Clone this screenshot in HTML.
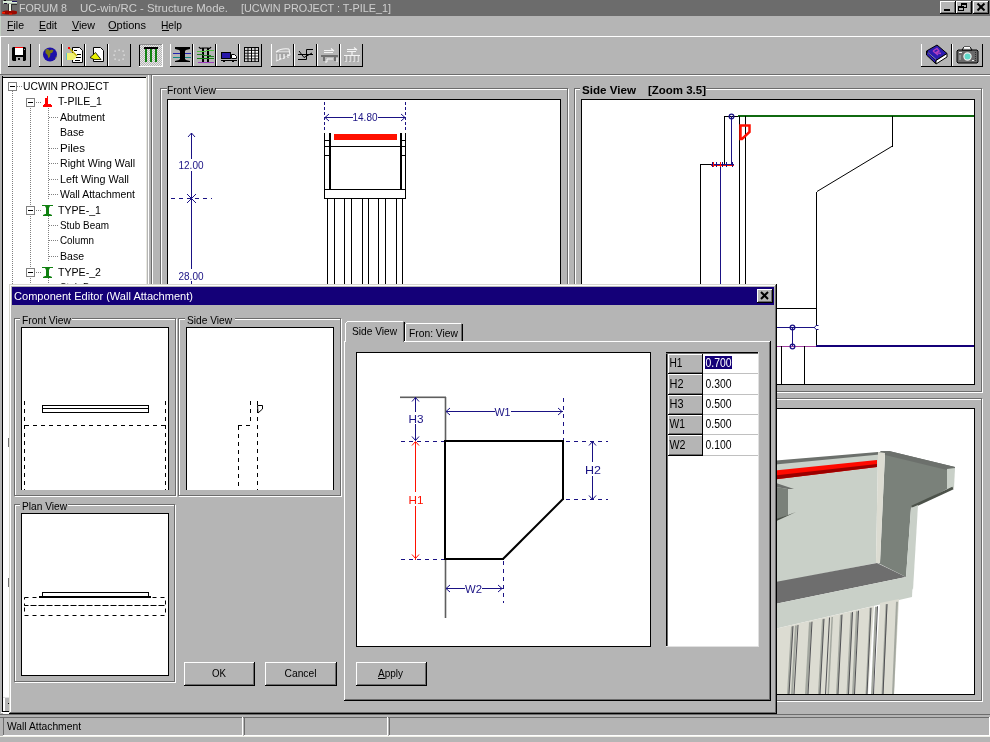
<!DOCTYPE html>
<html><head><meta charset="utf-8"><style>
html,body{margin:0;padding:0;background:#b5b5b5;overflow:hidden}
svg{display:block;will-change:transform}
text{font-family:"Liberation Sans", sans-serif}
</style></head><body>
<svg width="990" height="742" viewBox="0 0 990 742" shape-rendering="auto">
<rect x="0" y="0" width="990" height="742" fill="#b5b5b5"/>
<rect x="0" y="0" width="990" height="16" fill="#6c6c6c"/>
<rect x="0" y="0" width="1" height="16" fill="#8a8a8a"/>
<rect x="4" y="0" width="2" height="1" fill="#000000"/>
<rect x="3" y="1" width="14" height="2.5" fill="#d8ecd8"/>
<rect x="12" y="1" width="5" height="1" fill="#201860"/>
<rect x="4" y="3" width="3" height="1" fill="#201030"/>
<rect x="8" y="4" width="1" height="7" fill="#303030"/>
<rect x="9" y="4" width="2" height="7" fill="#f0f8e8"/>
<rect x="11" y="4" width="1" height="6" fill="#303030"/>
<rect x="12" y="4" width="5" height="1" fill="#303030"/>
<path d="M2 12 Q3 10.5 6 10.5 H13 Q17 10.5 17 12 V13.5 Q16 14.5 12 14.5 H7 Q3 14.5 2 13.5 Z" fill="#9a0800" />
<rect x="2" y="12" width="3" height="1.5" fill="#ff2000"/>
<rect x="9" y="13.5" width="3" height="1" fill="#ff2000"/>
<rect x="9" y="10" width="2" height="1" fill="#f0f8e8"/>
<text x="19" y="12" font-size="11.5" fill="#cfcfcf" textLength="48" lengthAdjust="spacingAndGlyphs" >FORUM 8</text>
<text x="80" y="12" font-size="11.5" fill="#cfcfcf" textLength="148" lengthAdjust="spacingAndGlyphs" >UC-win/RC - Structure Mode.</text>
<text x="241" y="12" font-size="11.5" fill="#cfcfcf" textLength="150" lengthAdjust="spacingAndGlyphs" >[UCWIN PROJECT : T-PILE_1]</text>
<rect x="940" y="1" width="16" height="13" fill="#b5b5b5"/>
<rect x="940" y="1" width="16" height="1" fill="#ffffff"/>
<rect x="940" y="1" width="1" height="13" fill="#ffffff"/>
<rect x="940" y="13" width="16" height="1" fill="#000000"/>
<rect x="955" y="1" width="1" height="13" fill="#000000"/>
<rect x="941" y="12" width="14" height="1" fill="#6c6c6c"/>
<rect x="954" y="2" width="1" height="11" fill="#6c6c6c"/>
<rect x="956" y="1" width="16" height="13" fill="#b5b5b5"/>
<rect x="956" y="1" width="16" height="1" fill="#ffffff"/>
<rect x="956" y="1" width="1" height="13" fill="#ffffff"/>
<rect x="956" y="13" width="16" height="1" fill="#000000"/>
<rect x="971" y="1" width="1" height="13" fill="#000000"/>
<rect x="957" y="12" width="14" height="1" fill="#6c6c6c"/>
<rect x="970" y="2" width="1" height="11" fill="#6c6c6c"/>
<rect x="973" y="1" width="16" height="13" fill="#b5b5b5"/>
<rect x="973" y="1" width="16" height="1" fill="#ffffff"/>
<rect x="973" y="1" width="1" height="13" fill="#ffffff"/>
<rect x="973" y="13" width="16" height="1" fill="#000000"/>
<rect x="988" y="1" width="1" height="13" fill="#000000"/>
<rect x="974" y="12" width="14" height="1" fill="#6c6c6c"/>
<rect x="987" y="2" width="1" height="11" fill="#6c6c6c"/>
<rect x="944" y="9" width="6" height="2" fill="#000000"/>
<rect x="961" y="3" width="6" height="1" fill="#000000"/>
<rect x="961" y="7" width="6" height="1" fill="#000000"/>
<rect x="961" y="3" width="1" height="5" fill="#000000"/>
<rect x="966" y="3" width="1" height="5" fill="#000000"/>
<rect x="961" y="3" width="6" height="2" fill="#000000"/>
<rect x="958" y="6" width="6" height="5" fill="#b5b5b5"/>
<rect x="958" y="6" width="6" height="1" fill="#000000"/>
<rect x="958" y="10" width="6" height="1" fill="#000000"/>
<rect x="958" y="6" width="1" height="5" fill="#000000"/>
<rect x="963" y="6" width="1" height="5" fill="#000000"/>
<rect x="958" y="6" width="6" height="2" fill="#000000"/>
<line x1="977.5" y1="3.5" x2="984.5" y2="10.5" stroke="#000000" stroke-width="2" stroke-linecap="butt"/>
<line x1="984.5" y1="3.5" x2="977.5" y2="10.5" stroke="#000000" stroke-width="2" stroke-linecap="butt"/>
<rect x="0" y="36" width="990" height="1" fill="#ffffff"/>
<text x="7" y="28.7" font-size="11.5" fill="#000000" textLength="17" lengthAdjust="spacingAndGlyphs" >File</text>
<text x="39" y="28.7" font-size="11.5" fill="#000000" textLength="18" lengthAdjust="spacingAndGlyphs" >Edit</text>
<text x="72" y="28.7" font-size="11.5" fill="#000000" textLength="23" lengthAdjust="spacingAndGlyphs" >View</text>
<text x="108" y="28.7" font-size="11.5" fill="#000000" textLength="38" lengthAdjust="spacingAndGlyphs" >Options</text>
<text x="161" y="28.7" font-size="11.5" fill="#000000" textLength="21" lengthAdjust="spacingAndGlyphs" >Help</text>
<rect x="7" y="30" width="7" height="1" fill="#000000"/>
<rect x="39" y="30" width="7" height="1" fill="#000000"/>
<rect x="72" y="30" width="7" height="1" fill="#000000"/>
<rect x="109" y="30" width="8" height="1" fill="#000000"/>
<rect x="162" y="30" width="7" height="1" fill="#000000"/>
<rect x="8" y="44" width="1" height="23" fill="#ffffff"/>
<rect x="30" y="44" width="1" height="23" fill="#000000"/>
<rect x="8" y="66" width="23" height="1" fill="#000000"/>
<rect x="39" y="44" width="1" height="23" fill="#ffffff"/>
<rect x="61" y="44" width="1" height="23" fill="#000000"/>
<rect x="39" y="66" width="23" height="1" fill="#000000"/>
<rect x="62" y="44" width="1" height="23" fill="#ffffff"/>
<rect x="84" y="44" width="1" height="23" fill="#000000"/>
<rect x="62" y="66" width="23" height="1" fill="#000000"/>
<rect x="85" y="44" width="1" height="23" fill="#ffffff"/>
<rect x="107" y="44" width="1" height="23" fill="#000000"/>
<rect x="85" y="66" width="23" height="1" fill="#000000"/>
<rect x="108" y="44" width="1" height="23" fill="#ffffff"/>
<rect x="130" y="44" width="1" height="23" fill="#000000"/>
<rect x="108" y="66" width="23" height="1" fill="#000000"/>
<rect x="170" y="44" width="1" height="23" fill="#ffffff"/>
<rect x="192" y="44" width="1" height="23" fill="#000000"/>
<rect x="170" y="66" width="23" height="1" fill="#000000"/>
<rect x="193" y="44" width="1" height="23" fill="#ffffff"/>
<rect x="215" y="44" width="1" height="23" fill="#000000"/>
<rect x="193" y="66" width="23" height="1" fill="#000000"/>
<rect x="216" y="44" width="1" height="23" fill="#ffffff"/>
<rect x="238" y="44" width="1" height="23" fill="#000000"/>
<rect x="216" y="66" width="23" height="1" fill="#000000"/>
<rect x="239" y="44" width="1" height="23" fill="#ffffff"/>
<rect x="261" y="44" width="1" height="23" fill="#000000"/>
<rect x="239" y="66" width="23" height="1" fill="#000000"/>
<rect x="271" y="44" width="1" height="23" fill="#ffffff"/>
<rect x="293" y="44" width="1" height="23" fill="#000000"/>
<rect x="271" y="66" width="23" height="1" fill="#000000"/>
<rect x="294" y="44" width="1" height="23" fill="#ffffff"/>
<rect x="316" y="44" width="1" height="23" fill="#000000"/>
<rect x="294" y="66" width="23" height="1" fill="#000000"/>
<rect x="317" y="44" width="1" height="23" fill="#ffffff"/>
<rect x="339" y="44" width="1" height="23" fill="#000000"/>
<rect x="317" y="66" width="23" height="1" fill="#000000"/>
<rect x="340" y="44" width="1" height="23" fill="#ffffff"/>
<rect x="362" y="44" width="1" height="23" fill="#000000"/>
<rect x="340" y="66" width="23" height="1" fill="#000000"/>
<rect x="921" y="44" width="1" height="23" fill="#ffffff"/>
<rect x="943" y="44" width="1" height="23" fill="#000000"/>
<rect x="921" y="66" width="23" height="1" fill="#000000"/>
<rect x="952" y="44" width="1" height="23" fill="#ffffff"/>
<rect x="974" y="44" width="1" height="23" fill="#000000"/>
<rect x="952" y="66" width="23" height="1" fill="#000000"/>
<rect x="921" y="44" width="31" height="23" fill="#b5b5b5"/>
<rect x="921" y="44" width="1" height="23" fill="#ffffff"/>
<rect x="951" y="44" width="1" height="23" fill="#000000"/>
<rect x="921" y="66" width="31" height="1" fill="#000000"/>
<rect x="952" y="44" width="31" height="23" fill="#b5b5b5"/>
<rect x="952" y="44" width="1" height="23" fill="#ffffff"/>
<rect x="982" y="44" width="1" height="23" fill="#000000"/>
<rect x="952" y="66" width="31" height="1" fill="#000000"/>
<defs><pattern id="dith" width="2" height="2" patternUnits="userSpaceOnUse"><rect width="2" height="2" fill="#b5b5b5"/><rect width="1" height="1" fill="#e8e8e8"/><rect x="1" y="1" width="1" height="1" fill="#e8e8e8"/></pattern></defs>
<rect x="139" y="44" width="24" height="23" fill="url(#dith)"/>
<rect x="139" y="44" width="1" height="23" fill="#000000"/>
<rect x="139" y="44" width="24" height="1" fill="#8a8a8a"/>
<rect x="162" y="44" width="1" height="23" fill="#ffffff"/>
<rect x="139" y="66" width="24" height="1" fill="#ffffff"/>
<path d="M13 47 H25 L26 48 V60 L25 61 H13 L12 60 V48 Z" fill="#000000" />
<rect x="15" y="48" width="8" height="7" fill="#ffffff"/>
<rect x="15" y="47" width="8" height="1" fill="#ff0000"/>
<rect x="24" y="49" width="1" height="1" fill="#a0a0a0"/>
<rect x="16" y="57" width="7" height="4" fill="#b0b0b0"/>
<rect x="18" y="58" width="2" height="2" fill="#000000"/>
<circle cx="50" cy="54.5" r="7" fill="#1c10a8"/>
<path d="M45.5 49.5 L48 49 L49.5 50.5 L52 49.5 L53.5 50.5 L52 53 L50.5 53 L50 56.5 L48.5 58.5 L47.5 55 L45.5 53 Z M55 57.5 L56.5 56.5 L56 58.5 Z" fill="#7c7a10" />
<path d="M72 47 H79 L82 50 V62 H72 Z" fill="#ffffff" stroke="#000000" stroke-width="1" transform="translate(0.5 0.5)"/>
<rect x="74" y="50" width="3" height="1" fill="#000000"/>
<rect x="77" y="54" width="4" height="1" fill="#000000"/>
<rect x="75" y="57" width="6" height="1" fill="#000000"/>
<rect x="75" y="60" width="5" height="1" fill="#000000"/>
<path d="M67 53 H73 L76 55 L76 58 L73 60 H67 Z" fill="#f0f070" />
<rect x="66" y="53" width="1" height="7" fill="#60c0c0"/>
<path d="M69 48 L77 56" fill="none" stroke="#c0b000" stroke-width="1.5" />
<rect x="68" y="47" width="2" height="2" fill="#ff0000"/>
<path d="M93 47 H100 L103 50 V61 H93 Z" fill="#ffffff" stroke="#000000" stroke-width="1" transform="translate(0.5 0.5)"/>
<path d="M90 57.5 L95.5 52.5 L101 59.5 H94 Z" fill="#e8f000" stroke="#000000" stroke-width="0.8" />
<rect x="123.5" y="54.5" width="1.2" height="1.2" fill="#f0f0f0"/>
<rect x="122.5" y="58.5" width="1.2" height="1.2" fill="#f0f0f0"/>
<rect x="118.5" y="59.5" width="1.2" height="1.2" fill="#f0f0f0"/>
<rect x="114.5" y="58.5" width="1.2" height="1.2" fill="#f0f0f0"/>
<rect x="113.5" y="54.5" width="1.2" height="1.2" fill="#f0f0f0"/>
<rect x="114.5" y="50.5" width="1.2" height="1.2" fill="#f0f0f0"/>
<rect x="118.5" y="49.5" width="1.2" height="1.2" fill="#f0f0f0"/>
<rect x="122.5" y="50.5" width="1.2" height="1.2" fill="#f0f0f0"/>
<rect x="144" y="47" width="14" height="2" fill="#000000"/>
<rect x="145" y="49" width="2" height="13" fill="#108010"/>
<rect x="150" y="49" width="2" height="13" fill="#108010"/>
<rect x="155" y="49" width="2" height="13" fill="#108010"/>
<path d="M175 47 H190 V49 L186 50 L185 51 V59 L186 60 L190 61 V62 H175 V61 L179 60 L180 59 V51 L179 50 L175 49 Z" fill="#000000" />
<rect x="173" y="53" width="18" height="1" fill="#2020b0"/>
<rect x="173" y="57" width="18" height="1" fill="#108888"/>
<rect x="180" y="51" width="5" height="8" fill="#000000"/>
<path d="M199 47 Q200 49 202 48 H208 Q210 49 211 47" fill="none" stroke="#000000" stroke-width="1.2" />
<rect x="202" y="48" width="2" height="14" fill="#000000"/>
<rect x="207" y="48" width="2" height="14" fill="#000000"/>
<rect x="206" y="50" width="8" height="1" fill="#50c040"/>
<rect x="197" y="51" width="9" height="1" fill="#50c040"/>
<rect x="197" y="54" width="6" height="1" fill="#208020"/>
<rect x="203" y="55" width="8" height="1" fill="#208020"/>
<rect x="209" y="56" width="5" height="1" fill="#208020"/>
<rect x="197" y="58" width="17" height="1" fill="#108010"/>
<rect x="198" y="62" width="16" height="1" fill="#a040c0"/>
<rect x="221" y="52" width="10" height="7" fill="#2818a8"/>
<rect x="221" y="52" width="10" height="1" fill="#000000"/>
<rect x="221" y="58" width="10" height="1" fill="#000000"/>
<rect x="221" y="52" width="1" height="7" fill="#000000"/>
<rect x="230" y="52" width="1" height="7" fill="#000000"/>
<path d="M231 54 H234 L236 56 V58 H231 Z" fill="#ffffff" stroke="#000000" stroke-width="1" transform="translate(0.5 0.5)"/>
<rect x="221" y="60" width="16" height="1" fill="#000000"/>
<rect x="223" y="61" width="2" height="1" fill="#000000"/>
<rect x="232" y="61" width="2" height="1" fill="#000000"/>
<rect x="244" y="47" width="15" height="15" fill="#000000"/>
<rect x="245.0" y="48.0" width="2.5" height="2" fill="#d0d0d0"/>
<rect x="245.0" y="50.8" width="2.5" height="2" fill="#d0d0d0"/>
<rect x="245.0" y="53.6" width="2.5" height="2" fill="#d0d0d0"/>
<rect x="245.0" y="56.4" width="2.5" height="2" fill="#d0d0d0"/>
<rect x="245.0" y="59.2" width="2.5" height="2" fill="#d0d0d0"/>
<rect x="248.5" y="48.0" width="2.5" height="2" fill="#d0d0d0"/>
<rect x="248.5" y="50.8" width="2.5" height="2" fill="#ffffff"/>
<rect x="248.5" y="53.6" width="2.5" height="2" fill="#ffffff"/>
<rect x="248.5" y="56.4" width="2.5" height="2" fill="#ffffff"/>
<rect x="248.5" y="59.2" width="2.5" height="2" fill="#d0d0d0"/>
<rect x="252.0" y="48.0" width="2.5" height="2" fill="#d0d0d0"/>
<rect x="252.0" y="50.8" width="2.5" height="2" fill="#ffffff"/>
<rect x="252.0" y="53.6" width="2.5" height="2" fill="#ffffff"/>
<rect x="252.0" y="56.4" width="2.5" height="2" fill="#ffffff"/>
<rect x="252.0" y="59.2" width="2.5" height="2" fill="#d0d0d0"/>
<rect x="255.5" y="48.0" width="2.5" height="2" fill="#d0d0d0"/>
<rect x="255.5" y="50.8" width="2.5" height="2" fill="#ffffff"/>
<rect x="255.5" y="53.6" width="2.5" height="2" fill="#ffffff"/>
<rect x="255.5" y="56.4" width="2.5" height="2" fill="#ffffff"/>
<rect x="255.5" y="59.2" width="2.5" height="2" fill="#d0d0d0"/>
<path d="M276 52 Q281 48 289 49 M277 54 V61 M280 54 V60 M284 54 V59 M288 54 V58 M276 61 L290 55 M289 49 L290 55 M276 52 H289" fill="none" stroke="#f4f4f4" stroke-width="1.1" />
<path d="M277 53 H289 M278 54 V60 M282 54 V59 M286 54 V58" fill="none" stroke="#8a8a8a" stroke-width="0.8" />
<path d="M306.5 49.5 H313 M306.5 49.5 V59.5 H298 M298 54.5 H313 M299 51 L304 57.5 L312 53" fill="none" stroke="#000000" stroke-width="1" />
<path d="M324 50.5 H334 M324 52.5 H333 M331 48.5 L334 51" fill="none" stroke="#f4f4f4" stroke-width="1.1" />
<rect x="321" y="55" width="17" height="2" fill="#707070"/>
<rect x="323" y="57" width="2" height="4" fill="#707070"/>
<rect x="334" y="57" width="2" height="4" fill="#707070"/>
<path d="M325 62 H327 V59 H333 M337 58 V62" fill="none" stroke="#f4f4f4" stroke-width="1" />
<path d="M347 49.5 H357 M347 51.5 H356 M354 47.5 L357 50" fill="none" stroke="#f4f4f4" stroke-width="1.1" />
<path d="M344 55.5 H360 M346 56 V62 M350 56 V62 M354 56 V62 M358 56 V62 M352 52 V55" fill="none" stroke="#f4f4f4" stroke-width="1.2" />
<path d="M345 56 V61 M349 56 V61 M353 56 V61 M357 56 V61" fill="none" stroke="#808080" stroke-width="0.8" />
<path d="M926.5 51 L937 45 L947 53.5 L936 60.5 Z" fill="#2c1cb0" stroke="#000000" stroke-width="1" />
<path d="M926.5 51 V55 L935.5 63.5 L936 60.5 Z" fill="#2c1cb0" stroke="#000000" stroke-width="1" />
<path d="M936 60.5 L947 53.5 V57 L936 64 Z" fill="#ffffff" stroke="#000000" stroke-width="1" />
<path d="M928 52.5 L936 59.5" fill="none" stroke="#a0a0e0" stroke-width="0.8" />
<path d="M933 51 L938 55 M933 51 L937 48.5 L939 51 L936 52.5 L941 53.5" fill="none" stroke="#b040c0" stroke-width="1.4" />
<path d="M958 50 H977 L978 51 V62 L977 63 H958 L957 62 V51 Z" fill="#6a6a6a" stroke="#000000" stroke-width="1" />
<path d="M962 50 L964 47 H970 L972 50 Z" fill="#d0d0d0" stroke="#000000" stroke-width="1" />
<rect x="964" y="47" width="6" height="1.5" fill="#ffffff"/>
<circle cx="967.5" cy="56.5" r="3.6" fill="#60d8c8" stroke="#f0f0f0" stroke-width="1.2"/>
<rect x="959" y="52" width="3" height="1" fill="#f0f0f0"/>
<rect x="959" y="55" width="2" height="5" fill="#909090"/>
<rect x="975" y="52" width="1" height="1" fill="#303030"/>
<rect x="975" y="54" width="1" height="1" fill="#303030"/>
<rect x="975" y="56" width="1" height="1" fill="#303030"/>
<rect x="975" y="58" width="1" height="1" fill="#303030"/>
<rect x="975" y="60" width="1" height="1" fill="#303030"/>
<rect x="972" y="60" width="2" height="1" fill="#f0f0f0"/>
<rect x="0" y="36" width="1" height="38" fill="#ffffff"/>
<rect x="0" y="16" width="1" height="20" fill="#c4d0c4"/>
<rect x="0" y="74" width="990" height="1" fill="#6c6c6c"/>
<rect x="152" y="75" width="838" height="1" fill="#ffffff"/>
<rect x="2" y="76" width="1" height="637" fill="#000000"/>
<rect x="2" y="77" width="145" height="1" fill="#000000"/>
<rect x="3" y="78" width="143" height="636" fill="#ffffff"/>
<rect x="146" y="77" width="1" height="637" fill="#e8e8e0"/>
<rect x="148" y="75" width="1" height="639" fill="#ffffff"/>
<rect x="151" y="75" width="1" height="639" fill="#6c6c6c"/>
<rect x="152" y="75" width="1" height="639" fill="#ffffff"/>
<rect x="12" y="91" width="1" height="1" fill="#808080"/>
<rect x="12" y="93" width="1" height="1" fill="#808080"/>
<rect x="12" y="95" width="1" height="1" fill="#808080"/>
<rect x="12" y="97" width="1" height="1" fill="#808080"/>
<rect x="12" y="99" width="1" height="1" fill="#808080"/>
<rect x="12" y="101" width="1" height="1" fill="#808080"/>
<rect x="12" y="103" width="1" height="1" fill="#808080"/>
<rect x="12" y="105" width="1" height="1" fill="#808080"/>
<rect x="12" y="107" width="1" height="1" fill="#808080"/>
<rect x="12" y="109" width="1" height="1" fill="#808080"/>
<rect x="12" y="111" width="1" height="1" fill="#808080"/>
<rect x="12" y="113" width="1" height="1" fill="#808080"/>
<rect x="12" y="115" width="1" height="1" fill="#808080"/>
<rect x="12" y="117" width="1" height="1" fill="#808080"/>
<rect x="12" y="119" width="1" height="1" fill="#808080"/>
<rect x="12" y="121" width="1" height="1" fill="#808080"/>
<rect x="12" y="123" width="1" height="1" fill="#808080"/>
<rect x="12" y="125" width="1" height="1" fill="#808080"/>
<rect x="12" y="127" width="1" height="1" fill="#808080"/>
<rect x="12" y="129" width="1" height="1" fill="#808080"/>
<rect x="12" y="131" width="1" height="1" fill="#808080"/>
<rect x="12" y="133" width="1" height="1" fill="#808080"/>
<rect x="12" y="135" width="1" height="1" fill="#808080"/>
<rect x="12" y="137" width="1" height="1" fill="#808080"/>
<rect x="12" y="139" width="1" height="1" fill="#808080"/>
<rect x="12" y="141" width="1" height="1" fill="#808080"/>
<rect x="12" y="143" width="1" height="1" fill="#808080"/>
<rect x="12" y="145" width="1" height="1" fill="#808080"/>
<rect x="12" y="147" width="1" height="1" fill="#808080"/>
<rect x="12" y="149" width="1" height="1" fill="#808080"/>
<rect x="12" y="151" width="1" height="1" fill="#808080"/>
<rect x="12" y="153" width="1" height="1" fill="#808080"/>
<rect x="12" y="155" width="1" height="1" fill="#808080"/>
<rect x="12" y="157" width="1" height="1" fill="#808080"/>
<rect x="12" y="159" width="1" height="1" fill="#808080"/>
<rect x="12" y="161" width="1" height="1" fill="#808080"/>
<rect x="12" y="163" width="1" height="1" fill="#808080"/>
<rect x="12" y="165" width="1" height="1" fill="#808080"/>
<rect x="12" y="167" width="1" height="1" fill="#808080"/>
<rect x="12" y="169" width="1" height="1" fill="#808080"/>
<rect x="12" y="171" width="1" height="1" fill="#808080"/>
<rect x="12" y="173" width="1" height="1" fill="#808080"/>
<rect x="12" y="175" width="1" height="1" fill="#808080"/>
<rect x="12" y="177" width="1" height="1" fill="#808080"/>
<rect x="12" y="179" width="1" height="1" fill="#808080"/>
<rect x="12" y="181" width="1" height="1" fill="#808080"/>
<rect x="12" y="183" width="1" height="1" fill="#808080"/>
<rect x="12" y="185" width="1" height="1" fill="#808080"/>
<rect x="12" y="187" width="1" height="1" fill="#808080"/>
<rect x="12" y="189" width="1" height="1" fill="#808080"/>
<rect x="12" y="191" width="1" height="1" fill="#808080"/>
<rect x="12" y="193" width="1" height="1" fill="#808080"/>
<rect x="12" y="195" width="1" height="1" fill="#808080"/>
<rect x="12" y="197" width="1" height="1" fill="#808080"/>
<rect x="12" y="199" width="1" height="1" fill="#808080"/>
<rect x="12" y="201" width="1" height="1" fill="#808080"/>
<rect x="12" y="203" width="1" height="1" fill="#808080"/>
<rect x="12" y="205" width="1" height="1" fill="#808080"/>
<rect x="12" y="207" width="1" height="1" fill="#808080"/>
<rect x="12" y="209" width="1" height="1" fill="#808080"/>
<rect x="12" y="211" width="1" height="1" fill="#808080"/>
<rect x="12" y="213" width="1" height="1" fill="#808080"/>
<rect x="12" y="215" width="1" height="1" fill="#808080"/>
<rect x="12" y="217" width="1" height="1" fill="#808080"/>
<rect x="12" y="219" width="1" height="1" fill="#808080"/>
<rect x="12" y="221" width="1" height="1" fill="#808080"/>
<rect x="12" y="223" width="1" height="1" fill="#808080"/>
<rect x="12" y="225" width="1" height="1" fill="#808080"/>
<rect x="12" y="227" width="1" height="1" fill="#808080"/>
<rect x="12" y="229" width="1" height="1" fill="#808080"/>
<rect x="12" y="231" width="1" height="1" fill="#808080"/>
<rect x="12" y="233" width="1" height="1" fill="#808080"/>
<rect x="12" y="235" width="1" height="1" fill="#808080"/>
<rect x="12" y="237" width="1" height="1" fill="#808080"/>
<rect x="12" y="239" width="1" height="1" fill="#808080"/>
<rect x="12" y="241" width="1" height="1" fill="#808080"/>
<rect x="12" y="243" width="1" height="1" fill="#808080"/>
<rect x="12" y="245" width="1" height="1" fill="#808080"/>
<rect x="12" y="247" width="1" height="1" fill="#808080"/>
<rect x="12" y="249" width="1" height="1" fill="#808080"/>
<rect x="12" y="251" width="1" height="1" fill="#808080"/>
<rect x="12" y="253" width="1" height="1" fill="#808080"/>
<rect x="12" y="255" width="1" height="1" fill="#808080"/>
<rect x="12" y="257" width="1" height="1" fill="#808080"/>
<rect x="12" y="259" width="1" height="1" fill="#808080"/>
<rect x="12" y="261" width="1" height="1" fill="#808080"/>
<rect x="12" y="263" width="1" height="1" fill="#808080"/>
<rect x="12" y="265" width="1" height="1" fill="#808080"/>
<rect x="12" y="267" width="1" height="1" fill="#808080"/>
<rect x="12" y="269" width="1" height="1" fill="#808080"/>
<rect x="12" y="271" width="1" height="1" fill="#808080"/>
<rect x="12" y="273" width="1" height="1" fill="#808080"/>
<rect x="12" y="275" width="1" height="1" fill="#808080"/>
<rect x="12" y="277" width="1" height="1" fill="#808080"/>
<rect x="12" y="279" width="1" height="1" fill="#808080"/>
<rect x="12" y="281" width="1" height="1" fill="#808080"/>
<rect x="12" y="283" width="1" height="1" fill="#808080"/>
<rect x="8" y="82" width="9" height="9" fill="#ffffff"/>
<rect x="8" y="82" width="9" height="1" fill="#808080"/>
<rect x="8" y="90" width="9" height="1" fill="#808080"/>
<rect x="8" y="82" width="1" height="9" fill="#808080"/>
<rect x="16" y="82" width="1" height="9" fill="#808080"/>
<rect x="10" y="86" width="5" height="1" fill="#000000"/>
<rect x="17" y="86" width="1" height="1" fill="#808080"/>
<rect x="19" y="86" width="1" height="1" fill="#808080"/>
<rect x="21" y="86" width="1" height="1" fill="#808080"/>
<text x="23" y="89.5" font-size="11.5" fill="#000000" textLength="86" lengthAdjust="spacingAndGlyphs" >UCWIN PROJECT</text>
<rect x="30" y="106" width="1" height="1" fill="#808080"/>
<rect x="30" y="108" width="1" height="1" fill="#808080"/>
<rect x="30" y="110" width="1" height="1" fill="#808080"/>
<rect x="30" y="112" width="1" height="1" fill="#808080"/>
<rect x="30" y="114" width="1" height="1" fill="#808080"/>
<rect x="30" y="116" width="1" height="1" fill="#808080"/>
<rect x="30" y="118" width="1" height="1" fill="#808080"/>
<rect x="30" y="120" width="1" height="1" fill="#808080"/>
<rect x="30" y="122" width="1" height="1" fill="#808080"/>
<rect x="30" y="124" width="1" height="1" fill="#808080"/>
<rect x="30" y="126" width="1" height="1" fill="#808080"/>
<rect x="30" y="128" width="1" height="1" fill="#808080"/>
<rect x="30" y="130" width="1" height="1" fill="#808080"/>
<rect x="30" y="132" width="1" height="1" fill="#808080"/>
<rect x="30" y="134" width="1" height="1" fill="#808080"/>
<rect x="30" y="136" width="1" height="1" fill="#808080"/>
<rect x="30" y="138" width="1" height="1" fill="#808080"/>
<rect x="30" y="140" width="1" height="1" fill="#808080"/>
<rect x="30" y="142" width="1" height="1" fill="#808080"/>
<rect x="30" y="144" width="1" height="1" fill="#808080"/>
<rect x="30" y="146" width="1" height="1" fill="#808080"/>
<rect x="30" y="148" width="1" height="1" fill="#808080"/>
<rect x="30" y="150" width="1" height="1" fill="#808080"/>
<rect x="30" y="152" width="1" height="1" fill="#808080"/>
<rect x="30" y="154" width="1" height="1" fill="#808080"/>
<rect x="30" y="156" width="1" height="1" fill="#808080"/>
<rect x="30" y="158" width="1" height="1" fill="#808080"/>
<rect x="30" y="160" width="1" height="1" fill="#808080"/>
<rect x="30" y="162" width="1" height="1" fill="#808080"/>
<rect x="30" y="164" width="1" height="1" fill="#808080"/>
<rect x="30" y="166" width="1" height="1" fill="#808080"/>
<rect x="30" y="168" width="1" height="1" fill="#808080"/>
<rect x="30" y="170" width="1" height="1" fill="#808080"/>
<rect x="30" y="172" width="1" height="1" fill="#808080"/>
<rect x="30" y="174" width="1" height="1" fill="#808080"/>
<rect x="30" y="176" width="1" height="1" fill="#808080"/>
<rect x="30" y="178" width="1" height="1" fill="#808080"/>
<rect x="30" y="180" width="1" height="1" fill="#808080"/>
<rect x="30" y="182" width="1" height="1" fill="#808080"/>
<rect x="30" y="184" width="1" height="1" fill="#808080"/>
<rect x="30" y="186" width="1" height="1" fill="#808080"/>
<rect x="30" y="188" width="1" height="1" fill="#808080"/>
<rect x="30" y="190" width="1" height="1" fill="#808080"/>
<rect x="30" y="192" width="1" height="1" fill="#808080"/>
<rect x="30" y="194" width="1" height="1" fill="#808080"/>
<rect x="30" y="196" width="1" height="1" fill="#808080"/>
<rect x="30" y="198" width="1" height="1" fill="#808080"/>
<rect x="30" y="200" width="1" height="1" fill="#808080"/>
<rect x="30" y="202" width="1" height="1" fill="#808080"/>
<rect x="30" y="204" width="1" height="1" fill="#808080"/>
<rect x="30" y="206" width="1" height="1" fill="#808080"/>
<rect x="30" y="208" width="1" height="1" fill="#808080"/>
<rect x="30" y="210" width="1" height="1" fill="#808080"/>
<rect x="30" y="212" width="1" height="1" fill="#808080"/>
<rect x="30" y="214" width="1" height="1" fill="#808080"/>
<rect x="30" y="216" width="1" height="1" fill="#808080"/>
<rect x="30" y="218" width="1" height="1" fill="#808080"/>
<rect x="30" y="220" width="1" height="1" fill="#808080"/>
<rect x="30" y="222" width="1" height="1" fill="#808080"/>
<rect x="30" y="224" width="1" height="1" fill="#808080"/>
<rect x="30" y="226" width="1" height="1" fill="#808080"/>
<rect x="30" y="228" width="1" height="1" fill="#808080"/>
<rect x="30" y="230" width="1" height="1" fill="#808080"/>
<rect x="30" y="232" width="1" height="1" fill="#808080"/>
<rect x="30" y="234" width="1" height="1" fill="#808080"/>
<rect x="30" y="236" width="1" height="1" fill="#808080"/>
<rect x="30" y="238" width="1" height="1" fill="#808080"/>
<rect x="30" y="240" width="1" height="1" fill="#808080"/>
<rect x="30" y="242" width="1" height="1" fill="#808080"/>
<rect x="30" y="244" width="1" height="1" fill="#808080"/>
<rect x="30" y="246" width="1" height="1" fill="#808080"/>
<rect x="30" y="248" width="1" height="1" fill="#808080"/>
<rect x="30" y="250" width="1" height="1" fill="#808080"/>
<rect x="30" y="252" width="1" height="1" fill="#808080"/>
<rect x="30" y="254" width="1" height="1" fill="#808080"/>
<rect x="30" y="256" width="1" height="1" fill="#808080"/>
<rect x="30" y="258" width="1" height="1" fill="#808080"/>
<rect x="30" y="260" width="1" height="1" fill="#808080"/>
<rect x="30" y="262" width="1" height="1" fill="#808080"/>
<rect x="30" y="264" width="1" height="1" fill="#808080"/>
<rect x="30" y="266" width="1" height="1" fill="#808080"/>
<rect x="30" y="268" width="1" height="1" fill="#808080"/>
<rect x="30" y="270" width="1" height="1" fill="#808080"/>
<rect x="30" y="272" width="1" height="1" fill="#808080"/>
<rect x="30" y="274" width="1" height="1" fill="#808080"/>
<rect x="30" y="276" width="1" height="1" fill="#808080"/>
<rect x="30" y="278" width="1" height="1" fill="#808080"/>
<rect x="30" y="280" width="1" height="1" fill="#808080"/>
<rect x="30" y="282" width="1" height="1" fill="#808080"/>
<rect x="26" y="98" width="9" height="9" fill="#ffffff"/>
<rect x="26" y="98" width="9" height="1" fill="#808080"/>
<rect x="26" y="106" width="9" height="1" fill="#808080"/>
<rect x="26" y="98" width="1" height="9" fill="#808080"/>
<rect x="34" y="98" width="1" height="9" fill="#808080"/>
<rect x="28" y="102" width="5" height="1" fill="#000000"/>
<rect x="36" y="102" width="1" height="1" fill="#808080"/>
<rect x="38" y="102" width="1" height="1" fill="#808080"/>
<rect x="40" y="102" width="1" height="1" fill="#808080"/>
<rect x="45" y="98" width="3" height="7" fill="#ff0000"/>
<rect x="47" y="96" width="1" height="2" fill="#ff0000"/>
<rect x="44" y="104" width="7" height="1" fill="#ff0000"/>
<rect x="43" y="105" width="9" height="2" fill="#ff0000"/>
<text x="58" y="105" font-size="11.5" fill="#000000" textLength="44" lengthAdjust="spacingAndGlyphs" >T-PILE_1</text>
<rect x="48" y="108" width="1" height="1" fill="#808080"/>
<rect x="48" y="110" width="1" height="1" fill="#808080"/>
<rect x="48" y="112" width="1" height="1" fill="#808080"/>
<rect x="48" y="114" width="1" height="1" fill="#808080"/>
<rect x="48" y="116" width="1" height="1" fill="#808080"/>
<rect x="48" y="118" width="1" height="1" fill="#808080"/>
<rect x="48" y="120" width="1" height="1" fill="#808080"/>
<rect x="48" y="122" width="1" height="1" fill="#808080"/>
<rect x="48" y="124" width="1" height="1" fill="#808080"/>
<rect x="48" y="126" width="1" height="1" fill="#808080"/>
<rect x="48" y="128" width="1" height="1" fill="#808080"/>
<rect x="48" y="130" width="1" height="1" fill="#808080"/>
<rect x="48" y="132" width="1" height="1" fill="#808080"/>
<rect x="48" y="134" width="1" height="1" fill="#808080"/>
<rect x="48" y="136" width="1" height="1" fill="#808080"/>
<rect x="48" y="138" width="1" height="1" fill="#808080"/>
<rect x="48" y="140" width="1" height="1" fill="#808080"/>
<rect x="48" y="142" width="1" height="1" fill="#808080"/>
<rect x="48" y="144" width="1" height="1" fill="#808080"/>
<rect x="48" y="146" width="1" height="1" fill="#808080"/>
<rect x="48" y="148" width="1" height="1" fill="#808080"/>
<rect x="48" y="150" width="1" height="1" fill="#808080"/>
<rect x="48" y="152" width="1" height="1" fill="#808080"/>
<rect x="48" y="154" width="1" height="1" fill="#808080"/>
<rect x="48" y="156" width="1" height="1" fill="#808080"/>
<rect x="48" y="158" width="1" height="1" fill="#808080"/>
<rect x="48" y="160" width="1" height="1" fill="#808080"/>
<rect x="48" y="162" width="1" height="1" fill="#808080"/>
<rect x="48" y="164" width="1" height="1" fill="#808080"/>
<rect x="48" y="166" width="1" height="1" fill="#808080"/>
<rect x="48" y="168" width="1" height="1" fill="#808080"/>
<rect x="48" y="170" width="1" height="1" fill="#808080"/>
<rect x="48" y="172" width="1" height="1" fill="#808080"/>
<rect x="48" y="174" width="1" height="1" fill="#808080"/>
<rect x="48" y="176" width="1" height="1" fill="#808080"/>
<rect x="48" y="178" width="1" height="1" fill="#808080"/>
<rect x="48" y="180" width="1" height="1" fill="#808080"/>
<rect x="48" y="182" width="1" height="1" fill="#808080"/>
<rect x="48" y="184" width="1" height="1" fill="#808080"/>
<rect x="48" y="186" width="1" height="1" fill="#808080"/>
<rect x="48" y="188" width="1" height="1" fill="#808080"/>
<rect x="48" y="190" width="1" height="1" fill="#808080"/>
<rect x="48" y="192" width="1" height="1" fill="#808080"/>
<rect x="48" y="194" width="1" height="1" fill="#808080"/>
<rect x="48" y="196" width="1" height="1" fill="#808080"/>
<rect x="48" y="198" width="1" height="1" fill="#808080"/>
<rect x="49" y="117" width="1" height="1" fill="#808080"/>
<rect x="51" y="117" width="1" height="1" fill="#808080"/>
<rect x="53" y="117" width="1" height="1" fill="#808080"/>
<rect x="55" y="117" width="1" height="1" fill="#808080"/>
<rect x="57" y="117" width="1" height="1" fill="#808080"/>
<text x="60" y="120.5" font-size="11.5" fill="#000000" textLength="45" lengthAdjust="spacingAndGlyphs" >Abutment</text>
<text x="60" y="136.0" font-size="11.5" fill="#000000" textLength="24" lengthAdjust="spacingAndGlyphs" >Base</text>
<rect x="49" y="148" width="1" height="1" fill="#808080"/>
<rect x="51" y="148" width="1" height="1" fill="#808080"/>
<rect x="53" y="148" width="1" height="1" fill="#808080"/>
<rect x="55" y="148" width="1" height="1" fill="#808080"/>
<rect x="57" y="148" width="1" height="1" fill="#808080"/>
<text x="60" y="151.5" font-size="11.5" fill="#000000" textLength="25" lengthAdjust="spacingAndGlyphs" >Piles</text>
<rect x="49" y="163" width="1" height="1" fill="#808080"/>
<rect x="51" y="163" width="1" height="1" fill="#808080"/>
<rect x="53" y="163" width="1" height="1" fill="#808080"/>
<rect x="55" y="163" width="1" height="1" fill="#808080"/>
<rect x="57" y="163" width="1" height="1" fill="#808080"/>
<text x="60" y="167.0" font-size="11.5" fill="#000000" textLength="75" lengthAdjust="spacingAndGlyphs" >Right Wing Wall</text>
<rect x="49" y="179" width="1" height="1" fill="#808080"/>
<rect x="51" y="179" width="1" height="1" fill="#808080"/>
<rect x="53" y="179" width="1" height="1" fill="#808080"/>
<rect x="55" y="179" width="1" height="1" fill="#808080"/>
<rect x="57" y="179" width="1" height="1" fill="#808080"/>
<text x="60" y="182.5" font-size="11.5" fill="#000000" textLength="69" lengthAdjust="spacingAndGlyphs" >Left Wing Wall</text>
<rect x="49" y="194" width="1" height="1" fill="#808080"/>
<rect x="51" y="194" width="1" height="1" fill="#808080"/>
<rect x="53" y="194" width="1" height="1" fill="#808080"/>
<rect x="55" y="194" width="1" height="1" fill="#808080"/>
<rect x="57" y="194" width="1" height="1" fill="#808080"/>
<text x="60" y="198.0" font-size="11.5" fill="#000000" textLength="75" lengthAdjust="spacingAndGlyphs" >Wall Attachment</text>
<rect x="146" y="78" width="0" height="0" fill="#ffffff"/>
<rect x="26" y="206" width="9" height="9" fill="#ffffff"/>
<rect x="26" y="206" width="9" height="1" fill="#808080"/>
<rect x="26" y="214" width="9" height="1" fill="#808080"/>
<rect x="26" y="206" width="1" height="9" fill="#808080"/>
<rect x="34" y="206" width="1" height="9" fill="#808080"/>
<rect x="28" y="210" width="5" height="1" fill="#000000"/>
<rect x="36" y="210" width="1" height="1" fill="#808080"/>
<rect x="38" y="210" width="1" height="1" fill="#808080"/>
<rect x="40" y="210" width="1" height="1" fill="#808080"/>
<path d="M42 205 h11 v1 h-3 l-1 2 v6 h1 l2 1 v1 h-9 v-1 l2 -1 h1 v-6 l-1 -2 h-3 z" fill="#108010" />
<text x="58" y="213.5" font-size="11.5" fill="#000000" textLength="43" lengthAdjust="spacingAndGlyphs" >TYPE-_1</text>
<rect x="48" y="216" width="1" height="1" fill="#808080"/>
<rect x="48" y="218" width="1" height="1" fill="#808080"/>
<rect x="48" y="220" width="1" height="1" fill="#808080"/>
<rect x="48" y="222" width="1" height="1" fill="#808080"/>
<rect x="48" y="224" width="1" height="1" fill="#808080"/>
<rect x="48" y="226" width="1" height="1" fill="#808080"/>
<rect x="48" y="228" width="1" height="1" fill="#808080"/>
<rect x="48" y="230" width="1" height="1" fill="#808080"/>
<rect x="48" y="232" width="1" height="1" fill="#808080"/>
<rect x="48" y="234" width="1" height="1" fill="#808080"/>
<rect x="48" y="236" width="1" height="1" fill="#808080"/>
<rect x="48" y="238" width="1" height="1" fill="#808080"/>
<rect x="48" y="240" width="1" height="1" fill="#808080"/>
<rect x="48" y="242" width="1" height="1" fill="#808080"/>
<rect x="48" y="244" width="1" height="1" fill="#808080"/>
<rect x="48" y="246" width="1" height="1" fill="#808080"/>
<rect x="48" y="248" width="1" height="1" fill="#808080"/>
<rect x="48" y="250" width="1" height="1" fill="#808080"/>
<rect x="48" y="252" width="1" height="1" fill="#808080"/>
<rect x="48" y="254" width="1" height="1" fill="#808080"/>
<rect x="48" y="256" width="1" height="1" fill="#808080"/>
<rect x="48" y="258" width="1" height="1" fill="#808080"/>
<rect x="48" y="260" width="1" height="1" fill="#808080"/>
<rect x="49" y="225" width="1" height="1" fill="#808080"/>
<rect x="51" y="225" width="1" height="1" fill="#808080"/>
<rect x="53" y="225" width="1" height="1" fill="#808080"/>
<rect x="55" y="225" width="1" height="1" fill="#808080"/>
<rect x="57" y="225" width="1" height="1" fill="#808080"/>
<text x="60" y="228.5" font-size="11.5" fill="#000000" textLength="49" lengthAdjust="spacingAndGlyphs" >Stub Beam</text>
<rect x="49" y="240" width="1" height="1" fill="#808080"/>
<rect x="51" y="240" width="1" height="1" fill="#808080"/>
<rect x="53" y="240" width="1" height="1" fill="#808080"/>
<rect x="55" y="240" width="1" height="1" fill="#808080"/>
<rect x="57" y="240" width="1" height="1" fill="#808080"/>
<text x="60" y="244.0" font-size="11.5" fill="#000000" textLength="34" lengthAdjust="spacingAndGlyphs" >Column</text>
<rect x="49" y="256" width="1" height="1" fill="#808080"/>
<rect x="51" y="256" width="1" height="1" fill="#808080"/>
<rect x="53" y="256" width="1" height="1" fill="#808080"/>
<rect x="55" y="256" width="1" height="1" fill="#808080"/>
<rect x="57" y="256" width="1" height="1" fill="#808080"/>
<text x="60" y="259.5" font-size="11.5" fill="#000000" textLength="24" lengthAdjust="spacingAndGlyphs" >Base</text>
<rect x="26" y="268" width="9" height="9" fill="#ffffff"/>
<rect x="26" y="268" width="9" height="1" fill="#808080"/>
<rect x="26" y="276" width="9" height="1" fill="#808080"/>
<rect x="26" y="268" width="1" height="9" fill="#808080"/>
<rect x="34" y="268" width="1" height="9" fill="#808080"/>
<rect x="28" y="272" width="5" height="1" fill="#000000"/>
<rect x="36" y="272" width="1" height="1" fill="#808080"/>
<rect x="38" y="272" width="1" height="1" fill="#808080"/>
<rect x="40" y="272" width="1" height="1" fill="#808080"/>
<path d="M42 267 h11 v1 h-3 l-1 2 v6 h1 l2 1 v1 h-9 v-1 l2 -1 h1 v-6 l-1 -2 h-3 z" fill="#108010" />
<text x="58" y="275.5" font-size="11.5" fill="#000000" textLength="43" lengthAdjust="spacingAndGlyphs" >TYPE-_2</text>
<rect x="48" y="278" width="1" height="1" fill="#808080"/>
<rect x="48" y="280" width="1" height="1" fill="#808080"/>
<rect x="48" y="282" width="1" height="1" fill="#808080"/>
<rect x="48" y="284" width="1" height="1" fill="#808080"/>
<rect x="48" y="286" width="1" height="1" fill="#808080"/>
<rect x="48" y="288" width="1" height="1" fill="#808080"/>
<rect x="48" y="290" width="1" height="1" fill="#808080"/>
<text x="60" y="291" font-size="11.5" fill="#000000" textLength="49" lengthAdjust="spacingAndGlyphs" >Stub Beam</text>
<rect x="3" y="698" width="6" height="13" fill="#b5b5b5"/>
<rect x="3" y="698" width="1" height="13" fill="#ffffff"/>
<rect x="4" y="698" width="1" height="13" fill="#ffffff"/>
<rect x="3" y="697" width="6" height="1" fill="#e0e0e0"/>
<rect x="2" y="711" width="7" height="1" fill="#000000"/>
<rect x="1" y="712" width="9" height="1" fill="#ffffff"/>
<rect x="8" y="703" width="1" height="1" fill="#000000"/>
<rect x="8" y="438" width="1" height="9" fill="#707070"/>
<rect x="8" y="578" width="1" height="9" fill="#707070"/>
<rect x="161" y="89" width="408" height="1" fill="#ffffff"/>
<rect x="161" y="701" width="408" height="1" fill="#ffffff"/>
<rect x="161" y="89" width="1" height="613" fill="#ffffff"/>
<rect x="568" y="89" width="1" height="613" fill="#ffffff"/>
<rect x="160" y="88" width="408" height="1" fill="#6c6c6c"/>
<rect x="160" y="700" width="408" height="1" fill="#6c6c6c"/>
<rect x="160" y="88" width="1" height="613" fill="#6c6c6c"/>
<rect x="567" y="88" width="1" height="613" fill="#6c6c6c"/>
<rect x="167" y="82" width="49" height="12" fill="#b5b5b5"/>
<text x="167" y="93.5" font-size="11.5" fill="#000000" textLength="49" lengthAdjust="spacingAndGlyphs" >Front View</text>
<rect x="167" y="99" width="394" height="596" fill="#ffffff"/>
<rect x="167" y="99" width="394" height="1" fill="#000000"/>
<rect x="167" y="694" width="394" height="1" fill="#000000"/>
<rect x="167" y="99" width="1" height="596" fill="#000000"/>
<rect x="560" y="99" width="1" height="596" fill="#000000"/>
<line x1="324.5" y1="102" x2="324.5" y2="130" stroke="#1a1284" stroke-width="1" stroke-linecap="butt" stroke-dasharray="3 2"/>
<line x1="405.5" y1="102" x2="405.5" y2="130" stroke="#1a1284" stroke-width="1" stroke-linecap="butt" stroke-dasharray="3 2"/>
<rect x="325" y="117" width="28" height="1" fill="#1a1284"/>
<rect x="378" y="117" width="28" height="1" fill="#1a1284"/>
<path d="M329 114 L325 117.5 L329 121 M401 114 L405 117.5 L401 121" fill="none" stroke="#1a1284" stroke-width="1" />
<text x="365" y="120.5" font-size="11.5" fill="#1a1284" text-anchor="middle" textLength="25" lengthAdjust="spacingAndGlyphs" >14.80</text>
<rect x="324" y="133" width="1" height="57" fill="#000000"/>
<rect x="405" y="133" width="1" height="57" fill="#000000"/>
<rect x="329" y="133" width="2" height="56" fill="#000000"/>
<rect x="400" y="133" width="2" height="56" fill="#000000"/>
<rect x="324" y="140" width="7" height="1" fill="#000000"/>
<rect x="400" y="140" width="6" height="1" fill="#000000"/>
<rect x="324" y="146" width="7" height="1" fill="#000000"/>
<rect x="400" y="146" width="6" height="1" fill="#000000"/>
<rect x="324" y="155" width="7" height="1" fill="#000000"/>
<rect x="400" y="155" width="6" height="1" fill="#000000"/>
<rect x="330" y="146" width="72" height="1" fill="#000000"/>
<rect x="334" y="134" width="63" height="6" fill="#ff1000"/>
<rect x="324" y="189" width="82" height="1" fill="#000000"/>
<rect x="324" y="198" width="82" height="1" fill="#000000"/>
<rect x="324" y="189" width="1" height="10" fill="#000000"/>
<rect x="405" y="189" width="1" height="10" fill="#000000"/>
<rect x="327" y="198" width="1" height="87" fill="#000000"/>
<rect x="334" y="198" width="1" height="87" fill="#000000"/>
<rect x="344" y="198" width="1" height="87" fill="#000000"/>
<rect x="351" y="198" width="1" height="87" fill="#000000"/>
<rect x="362" y="198" width="1" height="87" fill="#000000"/>
<rect x="368" y="198" width="1" height="87" fill="#000000"/>
<rect x="378" y="198" width="1" height="87" fill="#000000"/>
<rect x="385" y="198" width="1" height="87" fill="#000000"/>
<rect x="396" y="198" width="1" height="87" fill="#000000"/>
<rect x="402" y="198" width="1" height="87" fill="#000000"/>
<rect x="191" y="133" width="1" height="152" fill="#1a1284"/>
<path d="M188 137 L191.5 133 L195 137" fill="none" stroke="#1a1284" stroke-width="1" />
<rect x="180" y="159" width="24" height="12" fill="#ffffff"/>
<text x="191" y="169" font-size="11.5" fill="#1a1284" text-anchor="middle" textLength="25" lengthAdjust="spacingAndGlyphs" >12.00</text>
<line x1="171" y1="198.5" x2="212" y2="198.5" stroke="#1a1284" stroke-width="1" stroke-linecap="butt" stroke-dasharray="4 4"/>
<path d="M187 194 L196 203 M196 194 L187 203" fill="none" stroke="#1a1284" stroke-width="1" />
<rect x="180" y="269" width="24" height="12" fill="#ffffff"/>
<text x="191" y="279.5" font-size="11.5" fill="#1a1284" text-anchor="middle" textLength="25" lengthAdjust="spacingAndGlyphs" >28.00</text>
<rect x="575" y="89" width="408" height="1" fill="#ffffff"/>
<rect x="575" y="392" width="408" height="1" fill="#ffffff"/>
<rect x="575" y="89" width="1" height="304" fill="#ffffff"/>
<rect x="982" y="89" width="1" height="304" fill="#ffffff"/>
<rect x="574" y="88" width="408" height="1" fill="#6c6c6c"/>
<rect x="574" y="391" width="408" height="1" fill="#6c6c6c"/>
<rect x="574" y="88" width="1" height="304" fill="#6c6c6c"/>
<rect x="981" y="88" width="1" height="304" fill="#6c6c6c"/>
<rect x="580" y="82" width="126" height="12" fill="#b5b5b5"/>
<text x="582" y="94" font-size="11.5" fill="#000000" font-weight="bold" textLength="54" lengthAdjust="spacingAndGlyphs" >Side View</text>
<text x="648" y="94" font-size="11.5" fill="#000000" font-weight="bold" textLength="58" lengthAdjust="spacingAndGlyphs" >[Zoom 3.5]</text>
<rect x="581" y="99" width="394" height="286" fill="#ffffff"/>
<rect x="581" y="99" width="394" height="1" fill="#000000"/>
<rect x="581" y="384" width="394" height="1" fill="#000000"/>
<rect x="581" y="99" width="1" height="286" fill="#000000"/>
<rect x="974" y="99" width="1" height="286" fill="#000000"/>
<rect x="724" y="116" width="15" height="1" fill="#000000"/>
<rect x="738" y="115" width="236" height="2" fill="#106a10"/>
<rect x="724" y="116" width="1" height="49" fill="#000000"/>
<rect x="739" y="116" width="1" height="269" fill="#000000"/>
<rect x="745" y="116" width="1" height="269" fill="#000000"/>
<rect x="731" y="116" width="1" height="49" fill="#1a1284"/>
<circle cx="731.5" cy="116.5" r="2.3" fill="none" stroke="#1a1284" stroke-width="1.3"/>
<rect x="700" y="164" width="12" height="1" fill="#000000"/>
<rect x="700" y="164" width="1" height="221" fill="#000000"/>
<rect x="711" y="164" width="23" height="1" fill="#1a1284"/>
<rect x="711" y="165" width="23" height="1" fill="#ff1000"/>
<rect x="720" y="165" width="1" height="220" fill="#1a1284"/>
<rect x="712" y="162" width="1" height="5" fill="#1a1284"/>
<rect x="716" y="162" width="1" height="5" fill="#1a1284"/>
<rect x="722" y="162" width="1" height="5" fill="#1a1284"/>
<rect x="726" y="162" width="1" height="5" fill="#1a1284"/>
<rect x="732" y="162" width="1" height="5" fill="#1a1284"/>
<rect x="713" y="162" width="1" height="5" fill="#ff1000"/>
<rect x="720" y="162" width="1" height="5" fill="#ff1000"/>
<path d="M740.5 125.5 H749.5 V132 L742 139 H740.5 Z" fill="none" stroke="#ff1000" stroke-width="2.5" />
<rect x="892" y="116" width="1" height="31" fill="#000000"/>
<line x1="892.5" y1="146" x2="817" y2="191.5" stroke="#000000" stroke-width="1" stroke-linecap="butt"/>
<rect x="816" y="192" width="1" height="155" fill="#000000"/>
<rect x="776" y="308" width="41" height="1" fill="#000000"/>
<rect x="776" y="327" width="41" height="1" fill="#1a1284"/>
<circle cx="792.5" cy="327.5" r="2.3" fill="none" stroke="#1a1284" stroke-width="1.3"/>
<rect x="792" y="327" width="1" height="20" fill="#1a1284"/>
<rect x="815" y="326" width="3" height="3" fill="#ffffff"/>
<path d="M818.5 325.5 H816 L814.5 327.5 L816 329.5 H818.5" fill="none" stroke="#1a1284" stroke-width="1" />
<rect x="776" y="346" width="41" height="1" fill="#a040a0"/>
<rect x="816" y="345" width="158" height="2" fill="#140078"/>
<circle cx="792.5" cy="346.5" r="2.3" fill="none" stroke="#1a1284" stroke-width="1.3"/>
<rect x="781" y="346" width="1" height="39" fill="#000000"/>
<rect x="804" y="346" width="1" height="39" fill="#000000"/>
<rect x="575" y="399" width="408" height="1" fill="#ffffff"/>
<rect x="575" y="701" width="408" height="1" fill="#ffffff"/>
<rect x="575" y="399" width="1" height="303" fill="#ffffff"/>
<rect x="982" y="399" width="1" height="303" fill="#ffffff"/>
<rect x="574" y="398" width="408" height="1" fill="#6c6c6c"/>
<rect x="574" y="700" width="408" height="1" fill="#6c6c6c"/>
<rect x="574" y="398" width="1" height="303" fill="#6c6c6c"/>
<rect x="981" y="398" width="1" height="303" fill="#6c6c6c"/>
<rect x="581" y="408" width="394" height="287" fill="#ffffff"/>
<rect x="581" y="408" width="394" height="1" fill="#000000"/>
<rect x="581" y="694" width="394" height="1" fill="#000000"/>
<rect x="581" y="408" width="1" height="287" fill="#000000"/>
<rect x="974" y="408" width="1" height="287" fill="#000000"/>
<defs><clipPath id="c3d"><rect x="582" y="409" width="392" height="285"/></clipPath></defs><g clip-path="url(#c3d)">
<path d="M770 464 L878 454 L876 563 L770 584 Z" fill="#c9d0c8" />
<path d="M770 461 L878 452 L889 452 L885 454 L770 465 Z" fill="#6c706c" />
<path d="M880 451 L889 451 L955 467 L955 469 L947 470 L885 455 Z" fill="#6c706c" />
<path d="M885 454 L947 469 L947 489 L911 508 L906 577 L878 563 L880 563 Z" fill="#7a817a" />
<path d="M880 451 L889 451 L955 467 L955 469 L947 470 L885 455 Z" fill="#6c706c" />
<path d="M947 469 L955 468 L954 488 L947 489 Z" fill="#c9d0c8" />
<line x1="953" y1="488" x2="912" y2="507" stroke="#4c524a" stroke-width="3" stroke-linecap="butt"/>
<path d="M911 508 L918 505 L913 590 L906 577 Z" fill="#c9d0c8" />
<path d="M878 452 L885 453 L880 563 L876 563 Z" fill="#dcdcd2" />
<path d="M770 471 L877 460 L877 467 L770 480 Z" fill="#ff0a00" />
<path d="M770 476 L877 464 L877 467 L770 480 Z" fill="#9a0000" />
<path d="M770 481 L794 489 L788 489 L770 486 Z" fill="#6c706c" />
<path d="M770 486 L788 489 L788 515 L770 522 Z" fill="#7a817a" />
<path d="M770 524 L796 512 L788 515 L770 521 Z" fill="#4c524a" />
<path d="M770 583 L877 563 L906 577 L770 605 Z" fill="#6e6e6e" />
<path d="M770 605 L906 577 L913 576 L912 597 L770 630 Z" fill="#c9d0c8" />
<path d="M770 630 L874 606 L868 694 L770 694 Z" fill="#dcdcd2" />
<path d="M880 603 L899 599 L894 694 L874 694 Z" fill="#dcdcd2" />
<line x1="792.0" y1="626.475" x2="788.0" y2="694" stroke="#a4a8a0" stroke-width="2" stroke-linecap="butt"/>
<line x1="793.0" y1="626.1225" x2="789.0" y2="694" stroke="#505054" stroke-width="1" stroke-linecap="butt"/>
<line x1="796.0" y1="625.535" x2="792.0" y2="694" stroke="#a4a8a0" stroke-width="2" stroke-linecap="butt"/>
<line x1="798.0" y1="624.9475" x2="794.0" y2="694" stroke="#505054" stroke-width="1" stroke-linecap="butt"/>
<line x1="810.25" y1="622.245" x2="806.25" y2="694" stroke="#a4a8a0" stroke-width="2.5" stroke-linecap="butt"/>
<line x1="812.0" y1="621.6575" x2="808.0" y2="694" stroke="#505054" stroke-width="1" stroke-linecap="butt"/>
<line x1="823.0" y1="619.19" x2="819.0" y2="694" stroke="#a4a8a0" stroke-width="2" stroke-linecap="butt"/>
<line x1="824.0" y1="618.8375" x2="820.0" y2="694" stroke="#505054" stroke-width="1" stroke-linecap="butt"/>
<line x1="829.5" y1="617.545" x2="825.5" y2="694" stroke="#505054" stroke-width="1" stroke-linecap="butt"/>
<line x1="832.25" y1="616.9575" x2="828.25" y2="694" stroke="#a4a8a0" stroke-width="1.5" stroke-linecap="butt"/>
<line x1="841.0" y1="614.96" x2="837.0" y2="694" stroke="#a4a8a0" stroke-width="2" stroke-linecap="butt"/>
<line x1="842.0" y1="614.6075" x2="838.0" y2="694" stroke="#505054" stroke-width="1" stroke-linecap="butt"/>
<line x1="851.5" y1="612.4925" x2="847.5" y2="694" stroke="#a4a8a0" stroke-width="2" stroke-linecap="butt"/>
<line x1="852.5" y1="612.14" x2="848.5" y2="694" stroke="#505054" stroke-width="1" stroke-linecap="butt"/>
<line x1="857.0" y1="611.2" x2="853.0" y2="694" stroke="#a4a8a0" stroke-width="2" stroke-linecap="butt"/>
<line x1="858.5" y1="610.73" x2="854.5" y2="694" stroke="#505054" stroke-width="1" stroke-linecap="butt"/>
<line x1="870.25" y1="608.0275" x2="866.25" y2="694" stroke="#a4a8a0" stroke-width="1.5" stroke-linecap="butt"/>
<line x1="871.0" y1="607.7925" x2="867.0" y2="694" stroke="#505054" stroke-width="1" stroke-linecap="butt"/>
<line x1="876.0" y1="606.735" x2="872.0" y2="694" stroke="#a4a8a0" stroke-width="2" stroke-linecap="butt"/>
<line x1="877.5" y1="606.265" x2="873.5" y2="694" stroke="#505054" stroke-width="1" stroke-linecap="butt"/>
<line x1="886.5" y1="604.2675" x2="882.5" y2="694" stroke="#a4a8a0" stroke-width="2" stroke-linecap="butt"/>
<line x1="887.0" y1="604.0325" x2="883.0" y2="694" stroke="#505054" stroke-width="1" stroke-linecap="butt"/>
<line x1="897.0" y1="601.8" x2="893.0" y2="694" stroke="#a4a8a0" stroke-width="2" stroke-linecap="butt"/>
</g>
<rect x="0" y="714" width="990" height="1" fill="#6c6c6c"/>
<rect x="0" y="717" width="990" height="1" fill="#6c6c6c"/>
<rect x="3" y="717" width="240" height="1" fill="#6c6c6c"/>
<rect x="3" y="717" width="1" height="19" fill="#6c6c6c"/>
<rect x="3" y="735" width="240" height="1" fill="#ffffff"/>
<rect x="242" y="717" width="1" height="19" fill="#ffffff"/>
<rect x="244" y="717" width="144" height="1" fill="#6c6c6c"/>
<rect x="244" y="717" width="1" height="19" fill="#6c6c6c"/>
<rect x="244" y="735" width="144" height="1" fill="#ffffff"/>
<rect x="387" y="717" width="1" height="19" fill="#ffffff"/>
<rect x="389" y="717" width="601" height="1" fill="#6c6c6c"/>
<rect x="389" y="717" width="1" height="19" fill="#6c6c6c"/>
<rect x="389" y="735" width="601" height="1" fill="#ffffff"/>
<rect x="989" y="717" width="1" height="19" fill="#ffffff"/>
<rect x="0" y="736" width="990" height="1" fill="#f0f0e8"/>
<text x="7" y="730" font-size="11.5" fill="#000000" textLength="74" lengthAdjust="spacingAndGlyphs" >Wall Attachment</text>
<rect x="9" y="284" width="768" height="430" fill="#b5b5b5"/>
<rect x="9" y="284" width="767" height="1" fill="#d8d8d0"/>
<rect x="9" y="284" width="1" height="430" fill="#d8d8d0"/>
<rect x="10" y="285" width="765" height="1" fill="#ffffff"/>
<rect x="10" y="285" width="1" height="428" fill="#ffffff"/>
<rect x="776" y="284" width="1" height="430" fill="#000000"/>
<rect x="9" y="713" width="768" height="1" fill="#000000"/>
<rect x="775" y="285" width="1" height="428" fill="#6c6c6c"/>
<rect x="10" y="712" width="766" height="1" fill="#6c6c6c"/>
<rect x="12" y="287" width="762" height="18" fill="#140078"/>
<text x="14" y="300" font-size="11.5" fill="#ffffff" textLength="179" lengthAdjust="spacingAndGlyphs" >Component Editor (Wall Attachment)</text>
<rect x="757" y="289" width="16" height="14" fill="#b5b5b5"/>
<rect x="757" y="289" width="16" height="1" fill="#ffffff"/>
<rect x="757" y="289" width="1" height="14" fill="#ffffff"/>
<rect x="757" y="302" width="16" height="1" fill="#000000"/>
<rect x="772" y="289" width="1" height="14" fill="#000000"/>
<rect x="758" y="301" width="14" height="1" fill="#6c6c6c"/>
<rect x="771" y="290" width="1" height="12" fill="#6c6c6c"/>
<line x1="761" y1="292" x2="768" y2="299" stroke="#000000" stroke-width="2" stroke-linecap="butt"/>
<line x1="768" y1="292" x2="761" y2="299" stroke="#000000" stroke-width="2" stroke-linecap="butt"/>
<rect x="15" y="319" width="162" height="1" fill="#ffffff"/>
<rect x="15" y="496" width="162" height="1" fill="#ffffff"/>
<rect x="15" y="319" width="1" height="178" fill="#ffffff"/>
<rect x="176" y="319" width="1" height="178" fill="#ffffff"/>
<rect x="14" y="318" width="162" height="1" fill="#6c6c6c"/>
<rect x="14" y="495" width="162" height="1" fill="#6c6c6c"/>
<rect x="14" y="318" width="1" height="178" fill="#6c6c6c"/>
<rect x="175" y="318" width="1" height="178" fill="#6c6c6c"/>
<rect x="20" y="312" width="52" height="12" fill="#b5b5b5"/>
<text x="22" y="324" font-size="11.5" fill="#000000" textLength="49" lengthAdjust="spacingAndGlyphs" >Front View</text>
<rect x="21" y="327" width="148" height="163" fill="#ffffff"/>
<rect x="21" y="327" width="1" height="163" fill="#000000"/>
<rect x="21" y="327" width="148" height="1" fill="#000000"/>
<rect x="168" y="327" width="1" height="163" fill="#000000"/>
<rect x="42" y="405" width="107" height="1" fill="#000000"/>
<rect x="42" y="412" width="107" height="1" fill="#000000"/>
<rect x="42" y="405" width="1" height="8" fill="#000000"/>
<rect x="148" y="405" width="1" height="8" fill="#000000"/>
<rect x="42" y="408" width="107" height="1" fill="#000000"/>
<line x1="24.5" y1="401" x2="24.5" y2="490" stroke="#000000" stroke-width="1" stroke-linecap="butt" stroke-dasharray="4 4"/>
<line x1="165.5" y1="401" x2="165.5" y2="490" stroke="#000000" stroke-width="1" stroke-linecap="butt" stroke-dasharray="4 4"/>
<line x1="25" y1="425.5" x2="165" y2="425.5" stroke="#000000" stroke-width="1" stroke-linecap="butt" stroke-dasharray="4 4"/>
<rect x="179" y="319" width="163" height="1" fill="#ffffff"/>
<rect x="179" y="496" width="163" height="1" fill="#ffffff"/>
<rect x="179" y="319" width="1" height="178" fill="#ffffff"/>
<rect x="341" y="319" width="1" height="178" fill="#ffffff"/>
<rect x="178" y="318" width="163" height="1" fill="#6c6c6c"/>
<rect x="178" y="495" width="163" height="1" fill="#6c6c6c"/>
<rect x="178" y="318" width="1" height="178" fill="#6c6c6c"/>
<rect x="340" y="318" width="1" height="178" fill="#6c6c6c"/>
<rect x="185" y="312" width="50" height="12" fill="#b5b5b5"/>
<text x="187" y="324" font-size="11.5" fill="#000000" textLength="45" lengthAdjust="spacingAndGlyphs" >Side View</text>
<rect x="186" y="327" width="148" height="163" fill="#ffffff"/>
<rect x="186" y="327" width="1" height="163" fill="#000000"/>
<rect x="186" y="327" width="148" height="1" fill="#000000"/>
<rect x="333" y="327" width="1" height="163" fill="#000000"/>
<line x1="250.5" y1="401" x2="250.5" y2="425" stroke="#000000" stroke-width="1" stroke-linecap="butt" stroke-dasharray="4 4"/>
<line x1="238" y1="425.5" x2="250" y2="425.5" stroke="#000000" stroke-width="1" stroke-linecap="butt" stroke-dasharray="4 4"/>
<line x1="238.5" y1="426" x2="238.5" y2="490" stroke="#000000" stroke-width="1" stroke-linecap="butt" stroke-dasharray="4 4"/>
<line x1="257.5" y1="401" x2="257.5" y2="490" stroke="#000000" stroke-width="1" stroke-linecap="butt" stroke-dasharray="4 4"/>
<path d="M257.5 405.5 H262.5 V409 L258 413 Z" fill="none" stroke="#000000" stroke-width="1" />
<rect x="15" y="505" width="161" height="1" fill="#ffffff"/>
<rect x="15" y="682" width="161" height="1" fill="#ffffff"/>
<rect x="15" y="505" width="1" height="178" fill="#ffffff"/>
<rect x="175" y="505" width="1" height="178" fill="#ffffff"/>
<rect x="14" y="504" width="161" height="1" fill="#6c6c6c"/>
<rect x="14" y="681" width="161" height="1" fill="#6c6c6c"/>
<rect x="14" y="504" width="1" height="178" fill="#6c6c6c"/>
<rect x="174" y="504" width="1" height="178" fill="#6c6c6c"/>
<rect x="20" y="498" width="48" height="12" fill="#b5b5b5"/>
<text x="22" y="510" font-size="11.5" fill="#000000" textLength="45" lengthAdjust="spacingAndGlyphs" >Plan View</text>
<rect x="21" y="513" width="148" height="163" fill="#ffffff"/>
<rect x="21" y="513" width="148" height="1" fill="#000000"/>
<rect x="21" y="675" width="148" height="1" fill="#000000"/>
<rect x="21" y="513" width="1" height="163" fill="#000000"/>
<rect x="168" y="513" width="1" height="163" fill="#000000"/>
<rect x="42" y="592" width="107" height="1" fill="#000000"/>
<rect x="42" y="596" width="107" height="1" fill="#000000"/>
<rect x="42" y="592" width="1" height="5" fill="#000000"/>
<rect x="148" y="592" width="1" height="5" fill="#000000"/>
<rect x="39" y="596" width="112" height="2" fill="#000000"/>
<rect x="24.5" y="597.5" width="141" height="8" fill="none" stroke="#000" stroke-dasharray="4 4"/>
<rect x="24.5" y="605.5" width="141" height="10" fill="none" stroke="#000" stroke-dasharray="4 4"/>
<rect x="184" y="662" width="71" height="24" fill="#b5b5b5"/>
<rect x="184" y="662" width="71" height="1" fill="#ffffff"/>
<rect x="184" y="662" width="1" height="24" fill="#ffffff"/>
<rect x="184" y="685" width="71" height="1" fill="#000000"/>
<rect x="254" y="662" width="1" height="24" fill="#000000"/>
<rect x="185" y="684" width="69" height="1" fill="#6c6c6c"/>
<rect x="253" y="663" width="1" height="22" fill="#6c6c6c"/>
<text x="219" y="676.5" font-size="11.5" fill="#000000" text-anchor="middle" textLength="14" lengthAdjust="spacingAndGlyphs" >OK</text>
<rect x="265" y="662" width="72" height="24" fill="#b5b5b5"/>
<rect x="265" y="662" width="72" height="1" fill="#ffffff"/>
<rect x="265" y="662" width="1" height="24" fill="#ffffff"/>
<rect x="265" y="685" width="72" height="1" fill="#000000"/>
<rect x="336" y="662" width="1" height="24" fill="#000000"/>
<rect x="266" y="684" width="70" height="1" fill="#6c6c6c"/>
<rect x="335" y="663" width="1" height="22" fill="#6c6c6c"/>
<text x="300.5" y="676.5" font-size="11.5" fill="#000000" text-anchor="middle" textLength="32" lengthAdjust="spacingAndGlyphs" >Cancel</text>
<rect x="344" y="341" width="427" height="1" fill="#ffffff"/>
<rect x="344" y="341" width="1" height="360" fill="#ffffff"/>
<rect x="770" y="341" width="1" height="360" fill="#000000"/>
<rect x="344" y="700" width="427" height="1" fill="#000000"/>
<rect x="769" y="342" width="1" height="358" fill="#6c6c6c"/>
<rect x="345" y="699" width="425" height="1" fill="#6c6c6c"/>
<rect x="405" y="324" width="57" height="17" fill="#b5b5b5"/>
<rect x="406" y="323" width="55" height="1" fill="#ffffff"/>
<rect x="405" y="324" width="1" height="17" fill="#ffffff"/>
<rect x="462" y="324" width="1" height="17" fill="#000000"/>
<rect x="461" y="324" width="1" height="17" fill="#6c6c6c"/>
<text x="409" y="337" font-size="11.5" fill="#000000" textLength="49" lengthAdjust="spacingAndGlyphs" >Fron: View</text>
<rect x="345" y="322" width="59" height="20" fill="#b5b5b5"/>
<rect x="347" y="321" width="56" height="1" fill="#ffffff"/>
<rect x="345" y="323" width="1" height="19" fill="#ffffff"/>
<rect x="346" y="322" width="1" height="1" fill="#ffffff"/>
<rect x="404" y="322" width="1" height="19" fill="#000000"/>
<rect x="403" y="322" width="1" height="20" fill="#6c6c6c"/>
<text x="352" y="334.5" font-size="11.5" fill="#000000" textLength="45" lengthAdjust="spacingAndGlyphs" >Side View</text>
<rect x="356" y="352" width="295" height="295" fill="#ffffff"/>
<rect x="356" y="352" width="295" height="1" fill="#000000"/>
<rect x="356" y="352" width="1" height="295" fill="#000000"/>
<rect x="650" y="352" width="1" height="295" fill="#000000"/>
<rect x="356" y="646" width="295" height="1" fill="#000000"/>
<rect x="400" y="396.5" width="46" height="1.6" fill="#5e5e5e"/>
<rect x="444.7" y="397" width="1.6" height="44" fill="#5e5e5e"/>
<rect x="444.7" y="559" width="1.6" height="59" fill="#5e5e5e"/>
<rect x="444" y="440" width="120" height="2" fill="#000000"/>
<rect x="444" y="440" width="2" height="120" fill="#000000"/>
<rect x="562" y="440" width="2" height="60" fill="#000000"/>
<rect x="444" y="558" width="60" height="2" fill="#000000"/>
<line x1="503" y1="559" x2="563" y2="499" stroke="#000000" stroke-width="2" stroke-linecap="butt"/>
<rect x="415" y="397" width="1" height="44" fill="#1a1284"/>
<path d="M412 401.5 L415.5 397.5 L419 401.5 M412 436.5 L415.5 440.5 L419 436.5" fill="none" stroke="#1a1284" stroke-width="1" />
<rect x="406" y="412" width="20" height="12" fill="#ffffff"/>
<text x="416" y="423" font-size="11.5" fill="#1a1284" text-anchor="middle" textLength="15" lengthAdjust="spacingAndGlyphs" >H3</text>
<rect x="446" y="411" width="49" height="1" fill="#1a1284"/>
<rect x="511" y="411" width="52" height="1" fill="#1a1284"/>
<path d="M450 408 L446 411.5 L450 415 M558 408 L562 411.5 L558 415" fill="none" stroke="#1a1284" stroke-width="1" />
<text x="502.5" y="415.5" font-size="11.5" fill="#1a1284" text-anchor="middle" textLength="16" lengthAdjust="spacingAndGlyphs" >W1</text>
<line x1="563.5" y1="398" x2="563.5" y2="440" stroke="#1a1284" stroke-width="1" stroke-linecap="butt" stroke-dasharray="4 4"/>
<line x1="401" y1="441.5" x2="444" y2="441.5" stroke="#1a1284" stroke-width="1" stroke-linecap="butt" stroke-dasharray="4 4"/>
<line x1="566" y1="441.5" x2="608" y2="441.5" stroke="#1a1284" stroke-width="1" stroke-linecap="butt" stroke-dasharray="4 4"/>
<line x1="566" y1="499.5" x2="608" y2="499.5" stroke="#1a1284" stroke-width="1" stroke-linecap="butt" stroke-dasharray="4 4"/>
<rect x="592" y="442" width="1" height="58" fill="#1a1284"/>
<path d="M589 445.5 L592.5 441.5 L596 445.5 M589 495.5 L592.5 499.5 L596 495.5" fill="none" stroke="#1a1284" stroke-width="1" />
<rect x="582" y="462" width="22" height="14" fill="#ffffff"/>
<text x="593" y="474" font-size="11.5" fill="#1a1284" text-anchor="middle" textLength="16" lengthAdjust="spacingAndGlyphs" >H2</text>
<rect x="415" y="442" width="1" height="118" fill="#ff1000"/>
<path d="M412 445.5 L415.5 441.5 L419 445.5 M412 554.5 L415.5 558.5 L419 554.5" fill="none" stroke="#ff1000" stroke-width="1" />
<rect x="405" y="492" width="22" height="14" fill="#ffffff"/>
<text x="416" y="504" font-size="11.5" fill="#ff1000" text-anchor="middle" textLength="15" lengthAdjust="spacingAndGlyphs" >H1</text>
<line x1="401" y1="559.5" x2="444" y2="559.5" stroke="#1a1284" stroke-width="1" stroke-linecap="butt" stroke-dasharray="4 4"/>
<line x1="503.5" y1="561" x2="503.5" y2="603" stroke="#1a1284" stroke-width="1" stroke-linecap="butt" stroke-dasharray="4 4"/>
<rect x="446" y="588" width="19" height="1" fill="#1a1284"/>
<rect x="482" y="588" width="21" height="1" fill="#1a1284"/>
<path d="M450 585 L446 588.5 L450 592 M498 585 L502 588.5 L498 592" fill="none" stroke="#1a1284" stroke-width="1" />
<text x="473.5" y="592.5" font-size="11.5" fill="#1a1284" text-anchor="middle" textLength="17" lengthAdjust="spacingAndGlyphs" >W2</text>
<rect x="667" y="352" width="92" height="295" fill="#ffffff"/>
<rect x="666" y="352" width="93" height="1" fill="#000000"/>
<rect x="666" y="352" width="1" height="295" fill="#000000"/>
<rect x="666" y="353" width="93" height="1" fill="#6c6c6c"/>
<rect x="667" y="353" width="1" height="294" fill="#6c6c6c"/>
<rect x="758" y="352" width="1" height="295" fill="#e0e0e0"/>
<rect x="666" y="646" width="93" height="1" fill="#e0e0e0"/>
<rect x="668" y="354" width="35" height="20" fill="#b5b5b5"/>
<rect x="668" y="354" width="35" height="1" fill="#ffffff"/>
<rect x="668" y="354" width="1" height="20" fill="#ffffff"/>
<rect x="668" y="373" width="35" height="1" fill="#000000"/>
<rect x="702" y="354" width="1" height="20" fill="#000000"/>
<rect x="669" y="372" width="33" height="1" fill="#6c6c6c"/>
<rect x="703" y="373" width="55" height="1" fill="#c0c0c0"/>
<text x="669.5" y="366.8" font-size="12.5" fill="#000000" textLength="13" lengthAdjust="spacingAndGlyphs" >H1</text>
<rect x="705" y="356" width="27" height="13" fill="#140078"/>
<text x="705.5" y="366.8" font-size="12.5" fill="#ffffff" textLength="26" lengthAdjust="spacingAndGlyphs" >0.700</text>
<rect x="668" y="374" width="35" height="21" fill="#b5b5b5"/>
<rect x="668" y="374" width="35" height="1" fill="#ffffff"/>
<rect x="668" y="374" width="1" height="21" fill="#ffffff"/>
<rect x="668" y="394" width="35" height="1" fill="#000000"/>
<rect x="702" y="374" width="1" height="21" fill="#000000"/>
<rect x="669" y="393" width="33" height="1" fill="#6c6c6c"/>
<rect x="703" y="394" width="55" height="1" fill="#c0c0c0"/>
<text x="669.5" y="387.8" font-size="12.5" fill="#000000" textLength="14" lengthAdjust="spacingAndGlyphs" >H2</text>
<text x="705.5" y="387.8" font-size="12.5" fill="#000000" textLength="26" lengthAdjust="spacingAndGlyphs" >0.300</text>
<rect x="668" y="395" width="35" height="20" fill="#b5b5b5"/>
<rect x="668" y="395" width="35" height="1" fill="#ffffff"/>
<rect x="668" y="395" width="1" height="20" fill="#ffffff"/>
<rect x="668" y="414" width="35" height="1" fill="#000000"/>
<rect x="702" y="395" width="1" height="20" fill="#000000"/>
<rect x="669" y="413" width="33" height="1" fill="#6c6c6c"/>
<rect x="703" y="414" width="55" height="1" fill="#c0c0c0"/>
<text x="669.5" y="407.8" font-size="12.5" fill="#000000" textLength="14" lengthAdjust="spacingAndGlyphs" >H3</text>
<text x="705.5" y="407.8" font-size="12.5" fill="#000000" textLength="26" lengthAdjust="spacingAndGlyphs" >0.500</text>
<rect x="668" y="415" width="35" height="20" fill="#b5b5b5"/>
<rect x="668" y="415" width="35" height="1" fill="#ffffff"/>
<rect x="668" y="415" width="1" height="20" fill="#ffffff"/>
<rect x="668" y="434" width="35" height="1" fill="#000000"/>
<rect x="702" y="415" width="1" height="20" fill="#000000"/>
<rect x="669" y="433" width="33" height="1" fill="#6c6c6c"/>
<rect x="703" y="434" width="55" height="1" fill="#c0c0c0"/>
<text x="669.5" y="427.8" font-size="12.5" fill="#000000" textLength="15.5" lengthAdjust="spacingAndGlyphs" >W1</text>
<text x="705.5" y="427.8" font-size="12.5" fill="#000000" textLength="26" lengthAdjust="spacingAndGlyphs" >0.500</text>
<rect x="668" y="435" width="35" height="21" fill="#b5b5b5"/>
<rect x="668" y="435" width="35" height="1" fill="#ffffff"/>
<rect x="668" y="435" width="1" height="21" fill="#ffffff"/>
<rect x="668" y="455" width="35" height="1" fill="#000000"/>
<rect x="702" y="435" width="1" height="21" fill="#000000"/>
<rect x="669" y="454" width="33" height="1" fill="#6c6c6c"/>
<rect x="703" y="455" width="55" height="1" fill="#c0c0c0"/>
<text x="669.5" y="448.8" font-size="12.5" fill="#000000" textLength="16" lengthAdjust="spacingAndGlyphs" >W2</text>
<text x="705.5" y="448.8" font-size="12.5" fill="#000000" textLength="26" lengthAdjust="spacingAndGlyphs" >0.100</text>
<rect x="356" y="662" width="71" height="24" fill="#b5b5b5"/>
<rect x="356" y="662" width="71" height="1" fill="#ffffff"/>
<rect x="356" y="662" width="1" height="24" fill="#ffffff"/>
<rect x="356" y="685" width="71" height="1" fill="#000000"/>
<rect x="426" y="662" width="1" height="24" fill="#000000"/>
<rect x="357" y="684" width="69" height="1" fill="#6c6c6c"/>
<rect x="425" y="663" width="1" height="22" fill="#6c6c6c"/>
<text x="390.5" y="676.5" font-size="11.5" fill="#000000" text-anchor="middle" textLength="25" lengthAdjust="spacingAndGlyphs" >Apply</text>
<rect x="378" y="678" width="7" height="1" fill="#000000"/>
</svg></body></html>
